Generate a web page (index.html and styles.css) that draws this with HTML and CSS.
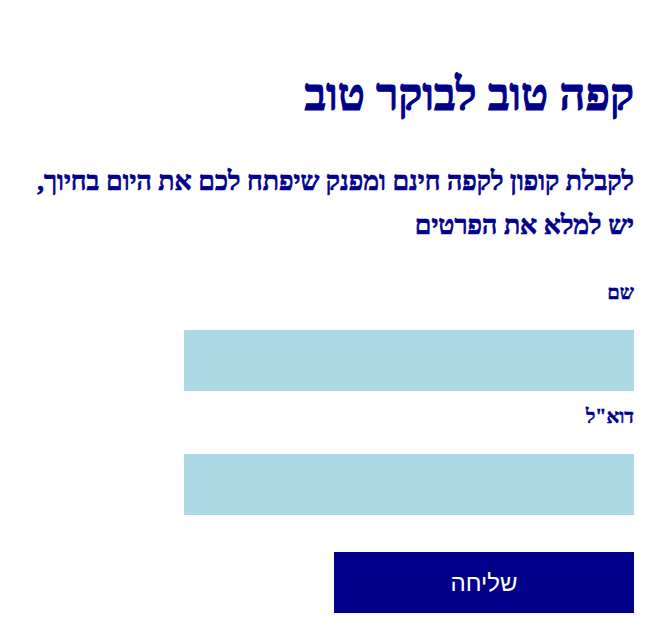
FILE: index.html
```html
<!DOCTYPE html>
<html lang="he" dir="rtl">
<head>
<meta charset="utf-8">
<link rel="stylesheet" href="styles.css">
</head>
<body>
<main class="page">
  <h1 class="title">קפה טוב לבוקר טוב</h1>
  <p class="intro">לקבלת קופון לקפה חינם ומפנק שיפתח לכם את היום בחיוך, יש למלא את הפרטים</p>
  <form class="form">
    <label class="label label-first" for="name">שם</label>
    <input class="field" id="name" type="text">
    <label class="label label-next" for="email">דוא"ל</label>
    <input class="field" id="email" type="email">
    <button class="submit" type="button">שליחה</button>
  </form>
</main>
</body>
</html>
```

FILE: styles.css
```css
html, body {
  margin: 0;
  padding: 0;
  background: #ffffff;
}
.page {
  padding: 68px 27px 0 27px;
  font-family: "Liberation Serif", "Times New Roman", serif;
  color: #00008b;
  font-weight: bold;
}
.title {
  margin: 0;
  font-size: 45px;
  line-height: 54px;
  -webkit-text-stroke: 1.2px #00008b;
}
.intro {
  margin: 37px 0 0 0;
  font-size: 26.6px;
  line-height: 44px;
  -webkit-text-stroke: 0.7px #00008b;
}
.form {
  display: flex;
  flex-direction: column;
  align-items: flex-start;
}
.label {
  font-size: 20px;
  line-height: 24px;
  margin-bottom: 26px;
  -webkit-text-stroke: 0.5px #00008b;
}
.label-first {
  margin-top: 33px;
}
.label-next {
  margin-top: 13px;
}
.field {
  box-sizing: border-box;
  width: 450px;
  height: 61px;
  border: none;
  background: #add8e6;
  margin: 0;
}
.submit {
  box-sizing: border-box;
  width: 300px;
  height: 61px;
  margin-top: 37px;
  border: none;
  background: #00008b;
  color: #ffffff;
  font-family: "Liberation Sans", Arial, sans-serif;
  font-weight: normal;
  font-size: 24px;
}
```
